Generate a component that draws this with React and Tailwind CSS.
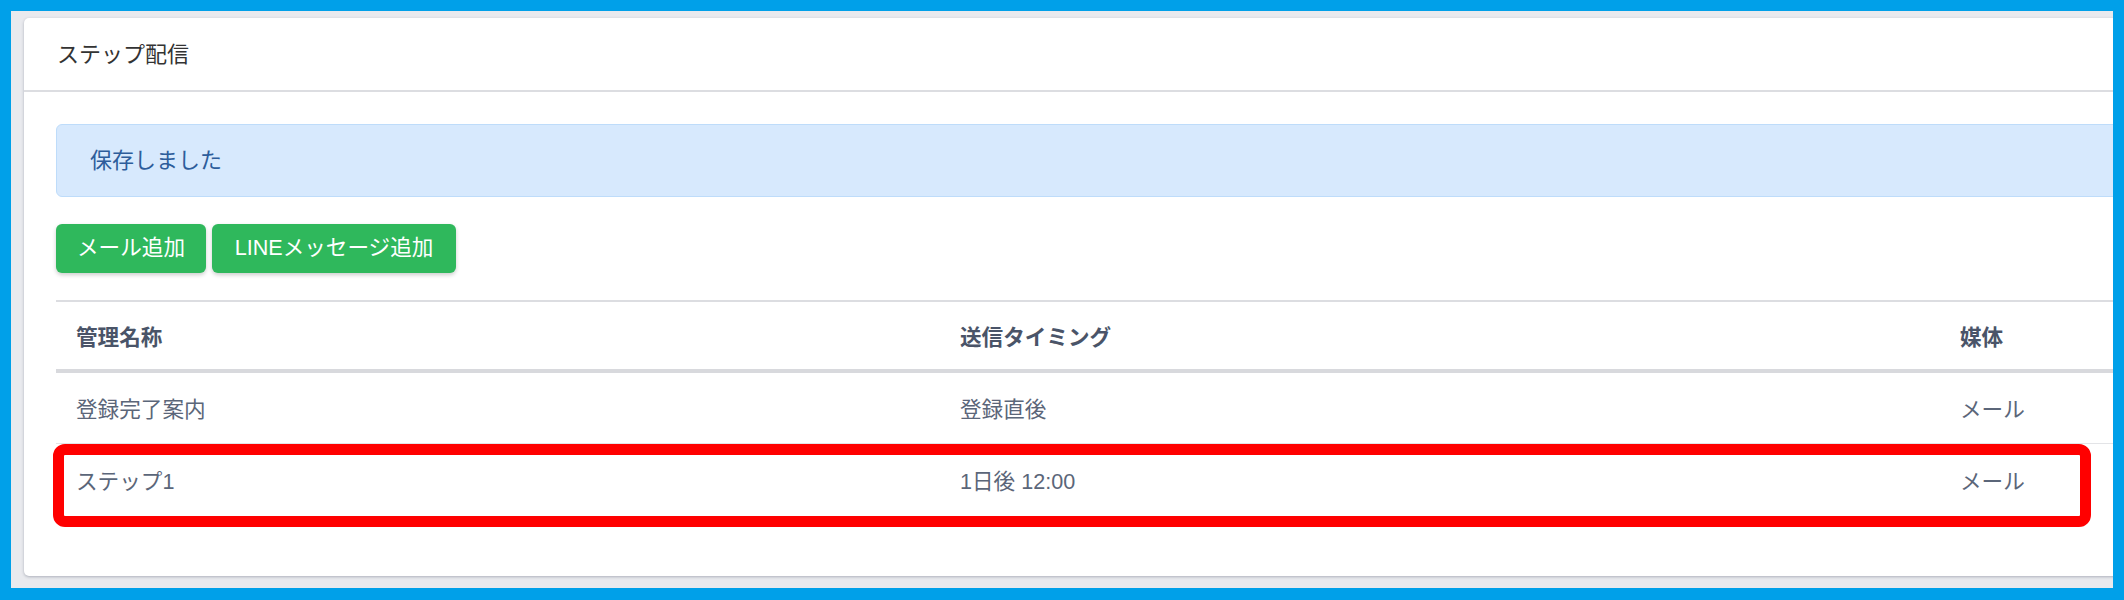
import React from 'react';

const rows = [
  { name: '登録完了案内', timing: '登録直後', media: 'メール' },
  { name: 'ステップ1', timing: '1日後 12:00', media: 'メール' },
];

export default function App() {
  return (
    <div
      className="h-[600px] w-[2124px] bg-[#00a0e9] pt-[11px] pl-[11px] pr-[11px] pb-[12px]"
      style={{ fontFamily: '"Liberation Sans", "Noto Sans CJK JP", sans-serif' }}
    >
      <div className="h-full overflow-hidden bg-[#e9eaee] pt-[7px] pl-[13px]">
        <div className="relative w-[2200px] h-[558px] bg-white rounded-[5px] shadow-[0_1px_3px_rgba(60,70,90,0.35)]">
          <div className="h-[74px] flex items-center px-[33px] border-b-2 border-[#dcdde1]">
            <h2 className="text-[22px] text-[#333]">ステップ配信</h2>
          </div>

          <div className="px-[32px] pt-[32px]">
            <div className="h-[73px] flex items-center pl-[33px] bg-[#d7e9fd] border border-[#bedcfa] rounded-[6px]">
              <p className="text-[22px] text-[#2d5d9b]">保存しました</p>
            </div>

            <div className="flex gap-[6px] mt-[27px]">
              <button className="w-[150px] h-[49px] flex items-center justify-center rounded-[6px] bg-[#2fb85c] text-white text-[21.6px] shadow-[0_2px_4px_rgba(0,0,0,0.2)]">
                メール追加
              </button>
              <button className="w-[244px] h-[49px] flex items-center justify-center rounded-[6px] bg-[#2fb85c] text-white text-[21.6px] shadow-[0_2px_4px_rgba(0,0,0,0.2)]">
                LINEメッセージ追加
              </button>
            </div>

            <table className="mt-[27px] w-[2136px] border-t-2 border-[#dcdde1] text-left">
              <thead>
                <tr className="border-b-4 border-[#d8d9dd]">
                  <th className="w-[884px] h-[70px] pl-[20px] pt-[5px] text-[21.6px] font-bold text-[#4a5468]">管理名称</th>
                  <th className="w-[1000px] h-[70px] pl-[20px] pt-[5px] text-[21.6px] font-bold text-[#4a5468]">送信タイミング</th>
                  <th className="h-[70px] pl-[20px] pt-[5px] text-[21.6px] font-bold text-[#4a5468]">媒体</th>
                </tr>
              </thead>
              <tbody>
                {rows.map((r, i) => (
                  <tr key={r.name} className={i < rows.length - 1 ? 'border-b border-[#e3e4e7]' : ''}>
                    <td className="h-[72px] pl-[20px] pt-[5px] text-[21.6px] text-[#5b6679]">{r.name}</td>
                    <td className="h-[72px] pl-[20px] pt-[5px] text-[21.6px] text-[#5b6679]">{r.timing}</td>
                    <td className="h-[72px] pl-[20px] pt-[5px] text-[21.6px] text-[#5b6679]">{r.media}</td>
                  </tr>
                ))}
              </tbody>
            </table>
          </div>

          <div className="absolute left-[29px] top-[426px] w-[2038px] h-[83px] border-[11px] border-[#ff0000] rounded-[12px] pointer-events-none" />
        </div>
      </div>
    </div>
  );
}
